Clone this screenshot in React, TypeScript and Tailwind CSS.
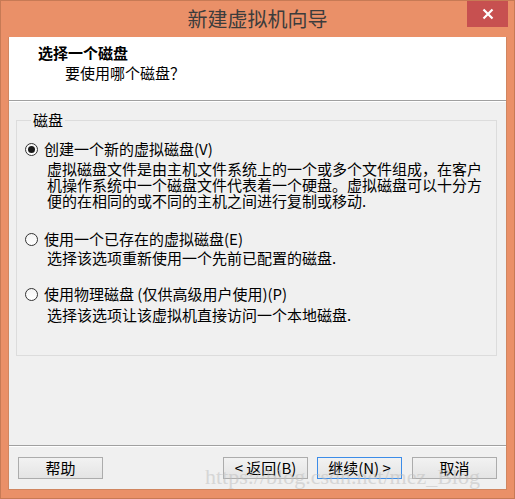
import React from "react";

const cjk = { fontFamily: '"Noto Sans CJK SC", "Noto Sans", sans-serif' };

function Radio({ checked }: { checked?: boolean }) {
  return (
    <span className="w-[13px] h-[13px] rounded-full border border-[#333333] bg-gradient-to-b from-[#f4f4f4] to-[#ffffff] flex items-center justify-center shrink-0">
      {checked && <span className="w-[7px] h-[7px] rounded-full bg-[#1a1a1a]" />}
    </span>
  );
}

function Btn({ children, primary }: { children: React.ReactNode; primary?: boolean }) {
  return (
    <div
      className={`w-[85px] h-[22px] flex items-center justify-center text-[15px] leading-[20px] text-black bg-gradient-to-b from-[#f2f2f2] to-[#e4e4e4] border ${
        primary ? "border-[#3c8ce8]" : "border-[#acacac]"
      }`}
    >
      {children}
    </div>
  );
}

export default function App() {
  return (
    <div
      className="w-[515px] h-[499px] bg-[#ea9068] border border-[#c77a55] flex flex-col relative overflow-hidden"
      style={cjk}
    >
      {/* title bar */}
      <div className="h-[36px] flex items-center justify-center relative shrink-0">
        <span className="text-[20px] leading-[24px] text-[#3c3c3c] mt-[-1px]">新建虚拟机向导</span>
        <div className="absolute right-[6px] top-0 w-[41px] h-[26px] bg-[#c75050] flex items-center justify-center">
          <svg width="12" height="12" viewBox="0 0 12 12">
            <path d="M1.5 1.5 L10.5 10.5 M10.5 1.5 L1.5 10.5" stroke="#ffffff" strokeWidth="2.2" />
          </svg>
        </div>
      </div>

      {/* client */}
      <div className="mx-[7px] h-[453px] flex flex-col bg-[#f0f0f0] border-l border-r border-b border-[#d08660]">
        {/* header */}
        <div className="h-[64px] bg-white border-b border-[#a0a0a0] pt-[6px] shrink-0">
          <div className="pl-[29px] text-[15px] leading-[20px] font-bold text-black">选择一个磁盘</div>
          <div className="pl-[56px] text-[15px] leading-[20px] text-black">要使用哪个磁盘？</div>
        </div>
        <div className="h-px bg-white shrink-0" />

        {/* body */}
        <div className="flex-1 flex flex-col">
          <fieldset className="mt-[8px] ml-[7px] mr-[9px] h-[246px] border border-[#dcdcdc] px-[8px] pt-[9px]">
            <legend className="ml-[6px] px-[2px] text-[15px] leading-[20px] text-black">磁盘</legend>

            <div className="flex items-center gap-[6px] h-[20px]">
              <Radio checked />
              <span className="text-[15px] leading-[20px] text-black">创建一个新的虚拟磁盘(V)</span>
            </div>
            <div className="pl-[22px] mt-[2px] text-[15px] leading-[16px] text-black">
              虚拟磁盘文件是由主机文件系统上的一个或多个文件组成，在客户<br />
              机操作系统中一个磁盘文件代表着一个硬盘。虚拟磁盘可以十分方<br />
              便的在相同的或不同的主机之间进行复制或移动.
            </div>

            <div className="flex items-center gap-[6px] h-[20px] mt-[20px]">
              <Radio />
              <span className="text-[15px] leading-[20px] text-black">使用一个已存在的虚拟磁盘(E)</span>
            </div>
            <div className="pl-[22px] mt-[1px] text-[15px] leading-[16px] text-black">
              选择该选项重新使用一个先前已配置的磁盘.
            </div>

            <div className="flex items-center gap-[6px] h-[20px] mt-[18px]">
              <Radio />
              <span className="text-[15px] leading-[20px] text-black">使用物理磁盘 (仅供高级用户使用)(P)</span>
            </div>
            <div className="pl-[22px] mt-[3px] text-[15px] leading-[16px] text-black">
              选择该选项让该虚拟机直接访问一个本地磁盘.
            </div>
          </fieldset>

          <div className="flex-1" />
          <div className="h-px bg-[#a0a0a0]" />
          <div className="h-px bg-white" />
          <div className="h-[42px] flex items-start pt-[10px] pl-[9px] pr-[9px]">
            <Btn>帮助</Btn>
            <div className="flex-1" />
            <Btn>&lt; 返回(B)</Btn>
            <div className="w-[9px]" />
            <Btn primary>继续(N) &gt;</Btn>
            <div className="w-[10px]" />
            <Btn>取消</Btn>
          </div>
        </div>
      </div>

      {/* watermark */}
      <div
        className="absolute left-[204px] top-[463px] text-[22px] leading-[26px] text-[#bdbdbd] opacity-50 pointer-events-none"
        style={{ fontFamily: '"Liberation Serif", serif' }}
      >
        https://blog.csdn.net/mez_Blog
      </div>
    </div>
  );
}
